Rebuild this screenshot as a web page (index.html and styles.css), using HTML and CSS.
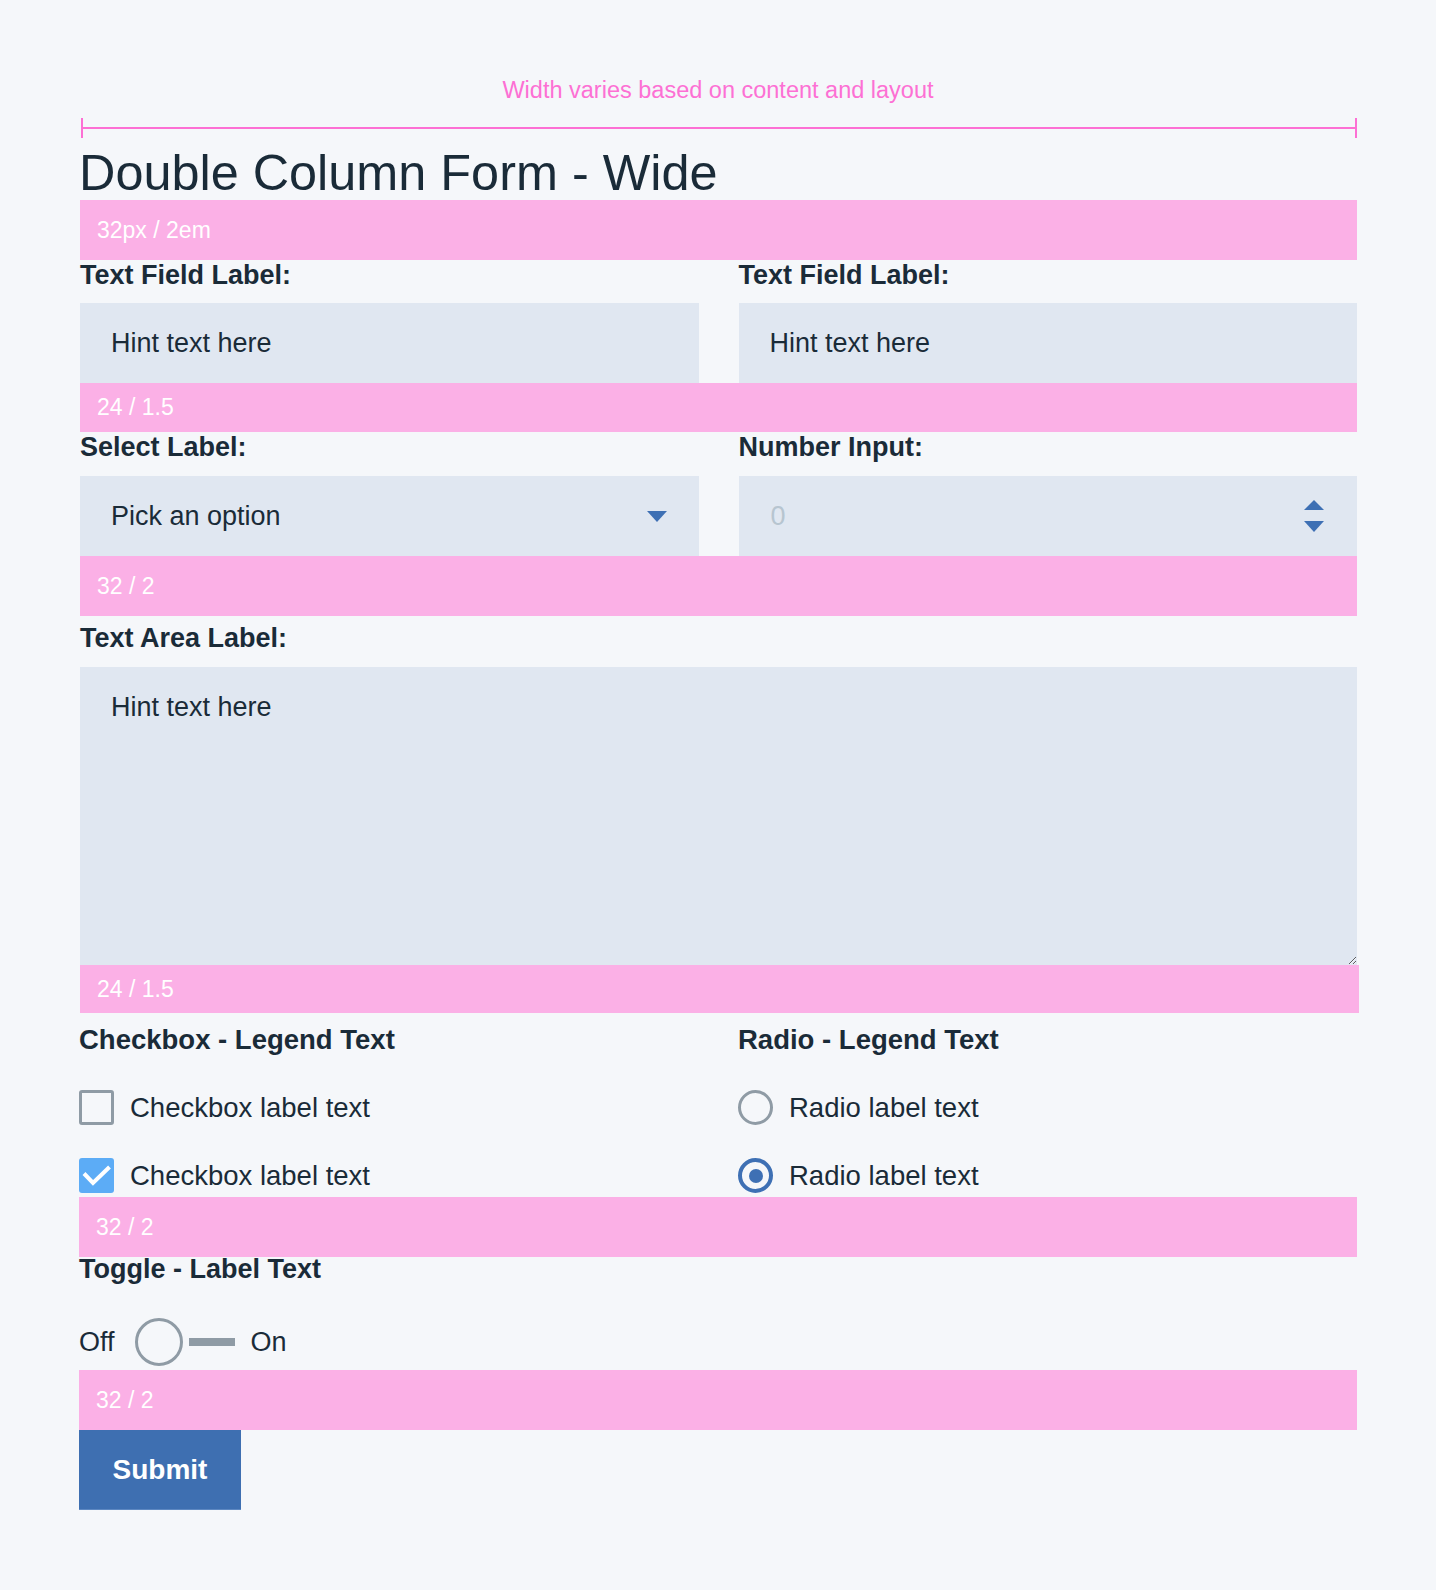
FILE: index.html
```html
<!DOCTYPE html>
<html lang="en">
<head>
    <meta charset="UTF-8">
    <title>Double Column Form - Wide</title>
    <link rel="stylesheet" href="styles.css">
</head>
<body>
    <div class="page">
        <p class="width-note">Width varies based on content and layout</p>
        <div class="ruler"><span class="ruler-line"></span></div>

        <h1 class="form-title">Double Column Form - Wide</h1>
        <div class="spacer spacer-lg inset">32px / 2em</div>

        <form class="form" id="wideForm">
            <div class="two-col inset">
                <div class="field">
                    <label class="field-label" for="textField1">Text Field Label:</label>
                    <input class="text-input" type="text" id="textField1" placeholder="Hint text here">
                </div>
                <div class="field">
                    <label class="field-label" for="textField2">Text Field Label:</label>
                    <input class="text-input" type="text" id="textField2" placeholder="Hint text here">
                </div>
            </div>
            <div class="spacer spacer-md inset">24 / 1.5</div>

            <div class="two-col inset">
                <div class="field">
                    <label class="field-label" for="selectField">Select Label:</label>
                    <div class="input-box">
                        <select class="select-input" id="selectField">
                            <option>Pick an option</option>
                            <option>Option one</option>
                            <option>Option two</option>
                        </select>
                        <svg class="select-arrow" width="20" height="11" viewBox="0 0 20 11"><path d="M0 0H20L10 11Z"/></svg>
                    </div>
                </div>
                <div class="field">
                    <label class="field-label" for="numberField">Number Input:</label>
                    <div class="input-box">
                        <input class="number-input" type="number" id="numberField" placeholder="0">
                        <svg class="spinner" width="20" height="32" viewBox="0 0 20 32"><path d="M10 0L20 10H0Z"/><path d="M0 21H20L10 32Z"/></svg>
                    </div>
                </div>
            </div>
            <div class="spacer spacer-lg inset">32 / 2</div>

            <div class="field inset">
                <label class="field-label area-label" for="textArea">Text Area Label:</label>
                <textarea class="text-area" id="textArea" placeholder="Hint text here"></textarea>
            </div>
            <div class="spacer spacer-md inset wide-end">24 / 1.5</div>

            <div class="two-col groups">
                <fieldset class="group">
                    <legend class="legend">Checkbox - Legend Text</legend>
                    <div class="options">
                        <label class="option">
                            <span class="check-box"></span>
                            <span>Checkbox label text</span>
                        </label>
                        <label class="option">
                            <span class="check-box is-checked">
                                <svg width="35" height="35" viewBox="0 0 35 35"><polyline points="5,15.5 14,25 30.5,9"/></svg>
                            </span>
                            <span>Checkbox label text</span>
                        </label>
                    </div>
                </fieldset>
                <fieldset class="group">
                    <legend class="legend">Radio - Legend Text</legend>
                    <div class="options">
                        <label class="option">
                            <span class="radio"></span>
                            <span>Radio label text</span>
                        </label>
                        <label class="option">
                            <span class="radio is-checked"><span class="radio-dot"></span></span>
                            <span>Radio label text</span>
                        </label>
                    </div>
                </fieldset>
            </div>
            <div class="spacer spacer-lg after-group">32 / 2</div>

            <div class="toggle-field">
                <div class="toggle-label">Toggle - Label Text</div>
                <div class="toggle-row">
                    <span>Off</span>
                    <span class="toggle">
                        <span class="toggle-knob"></span>
                        <span class="toggle-track"></span>
                    </span>
                    <span>On</span>
                </div>
            </div>
            <div class="spacer spacer-lg after-toggle">32 / 2</div>

            <button type="submit" class="submit-button">Submit</button>
        </form>
    </div>
</body>
</html>
```

FILE: styles.css
```css
body {
    margin: 0;
    background-color: #f5f7fa;
    color: #1a2b38;
    font-family: "Liberation Sans", Arial, sans-serif;
    font-size: 27px;
}
.page {
    width: 1278px;
    margin: 0 auto;
    padding: 76px 0 81px;
}
.inset {
    margin-left: 1px;
}
.width-note {
    margin: 0 0 14px;
    text-align: center;
    font-size: 23.5px;
    line-height: 28px;
    color: #fd70d4;
}
.ruler {
    display: flex;
    align-items: center;
    height: 20px;
    margin-left: 2px;
    border-left: 2px solid #fd70d4;
    border-right: 2px solid #fd70d4;
}
.ruler-line {
    flex: 1;
    height: 2px;
    background-color: #fd70d4;
}
.form-title {
    margin: 0;
    padding-top: 8px;
    font-size: 50.4px;
    font-weight: normal;
    line-height: 54px;
}
.spacer {
    display: flex;
    align-items: center;
    padding-left: 17px;
    background-color: #fbb0e6;
    color: #ffffff;
    font-size: 23px;
}
.spacer-lg {
    height: 60px;
}
.spacer-md {
    height: 49px;
}
.wide-end {
    margin-right: -2px;
    height: 48px;
}
.two-col {
    display: grid;
    grid-template-columns: 1fr 1fr;
    column-gap: 40px;
}
.field {
    display: flex;
    flex-direction: column;
}
.field-label {
    display: block;
    margin-bottom: 14px;
    font-weight: bold;
    line-height: 30px;
}
.two-col:first-child .field-label {
    margin-bottom: 13px;
}
.area-label {
    margin-top: 7px;
}
.text-input,
.input-box {
    box-sizing: border-box;
    height: 80px;
    width: 100%;
    border: none;
    background-color: #e0e7f1;
}
.text-input {
    padding: 0 31px;
    font: inherit;
    color: inherit;
}
.text-input::placeholder,
.text-area::placeholder {
    color: #1a2b38;
    opacity: 1;
}
.input-box {
    display: flex;
    align-items: center;
    padding: 0 32px 0 0;
}
.select-input,
.number-input {
    flex: 1;
    height: 100%;
    padding: 0 0 0 31px;
    border: none;
    background: transparent;
    font: inherit;
    color: inherit;
    appearance: none;
    -webkit-appearance: none;
    -moz-appearance: textfield;
    outline: none;
}
.number-input {
    padding-left: 32px;
}
.number-input::-webkit-inner-spin-button,
.number-input::-webkit-outer-spin-button {
    -webkit-appearance: none;
    margin: 0;
}
.number-input::placeholder {
    color: #b7c5d0;
    opacity: 1;
}
.select-arrow,
.spinner {
    fill: #3e70b4;
    flex-shrink: 0;
}
.spinner {
    margin-right: 1px;
}
.text-area {
    display: block;
    box-sizing: border-box;
    width: 100%;
    height: 298px;
    padding: 25px 31px;
    border: none;
    background-color: #e0e7f1;
    font: inherit;
    line-height: 30px;
    color: inherit;
}
.groups {
    padding-top: 12px;
    font-size: 27.5px;
}
.group {
    margin: 0;
    padding: 0;
    border: none;
    min-width: 0;
}
.legend {
    padding: 0;
    font-weight: bold;
    line-height: 30px;
}
.options {
    display: flex;
    flex-direction: column;
    gap: 33px;
    padding-top: 35px;
}
.option {
    display: flex;
    align-items: center;
    gap: 16px;
    height: 35px;
}
.check-box {
    box-sizing: border-box;
    width: 35px;
    height: 35px;
    border: 3px solid #8f9ba5;
    border-radius: 3px;
}
.check-box.is-checked {
    border: none;
    background-color: #5cacf6;
}
.check-box svg {
    display: block;
    fill: none;
    stroke: #ffffff;
    stroke-width: 4;
}
.radio {
    box-sizing: border-box;
    display: flex;
    align-items: center;
    justify-content: center;
    width: 35px;
    height: 35px;
    border: 3px solid #8f9ba5;
    border-radius: 50%;
}
.radio.is-checked {
    border: 4px solid #3e70b4;
}
.radio-dot {
    width: 14px;
    height: 14px;
    border-radius: 50%;
    background-color: #3e70b4;
}
.after-group {
    margin-top: 4px;
}
.toggle-label {
    font-weight: bold;
    line-height: 24px;
}
.toggle-row {
    display: flex;
    align-items: center;
    height: 48px;
    margin-top: 37px;
}
.toggle {
    display: flex;
    align-items: center;
    margin: 0 16px 0 20px;
}
.toggle-knob {
    box-sizing: border-box;
    width: 48px;
    height: 48px;
    border: 3px solid #8f9ba5;
    border-radius: 50%;
}
.toggle-track {
    width: 46px;
    height: 8px;
    margin-left: 6px;
    background-color: #8f9ba5;
}
.after-toggle {
    margin-top: 4px;
}
.submit-button {
    display: block;
    width: 162px;
    height: 80px;
    padding: 0;
    border: none;
    border-bottom: 1px solid #5d88c2;
    background-color: #3e6fb1;
    color: #ffffff;
    font-family: inherit;
    font-size: 28px;
    font-weight: bold;
    cursor: pointer;
}
```
